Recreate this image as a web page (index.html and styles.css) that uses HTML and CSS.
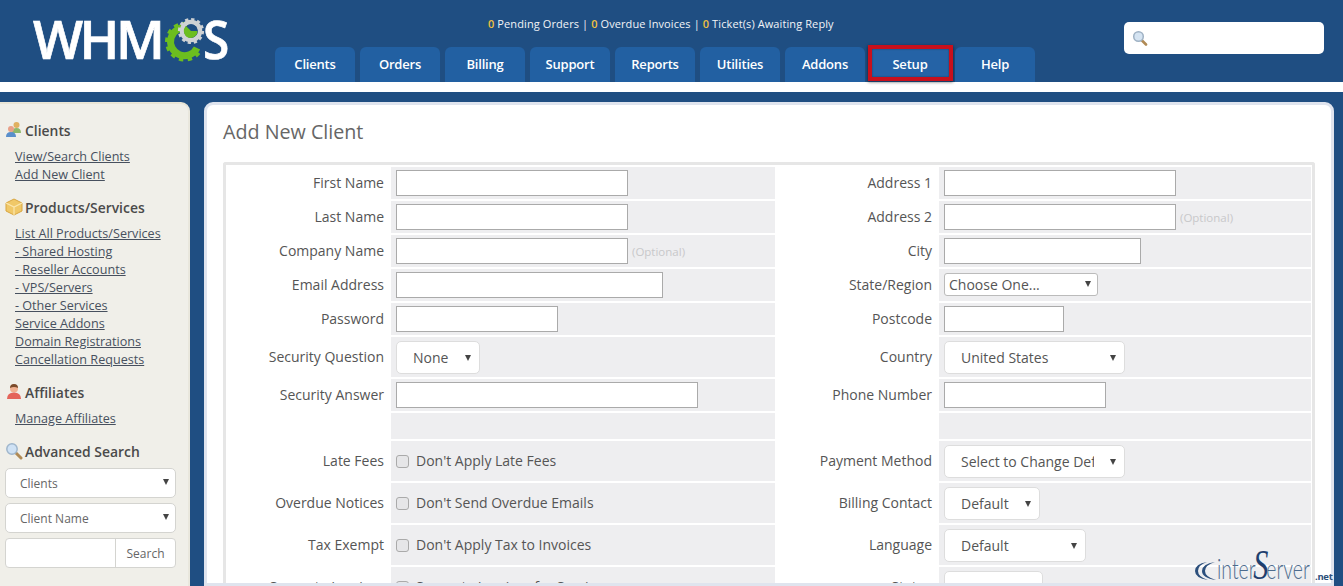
FILE: index.html
```html
<!DOCTYPE html>
<html lang="en">
<head>
<meta charset="utf-8">
<title>Add New Client</title>
<link rel="stylesheet" href="styles.css">
</head>
<body>
<header class="header">
  <a class="logo">WHM<svg class="logo-gear" viewBox="0 0 46 46" width="46" height="46" aria-hidden="true">
      <path d="M25.8 10.8 A14 14 0 1 0 36 31" fill="none" stroke="#6cbe1f" stroke-width="7"/>
      <path d="M25.8 7.5 A17.3 17.3 0 1 0 39 33" fill="none" stroke="#6cbe1f" stroke-width="5" stroke-dasharray="4.2 4.2"/>
      <circle cx="30" cy="14" r="9" fill="none" stroke="#cfd2d4" stroke-width="4.5"/>
      <circle cx="30" cy="14" r="11.5" fill="none" stroke="#cfd2d4" stroke-width="3.2" stroke-dasharray="3.2 2.8"/>
      <circle cx="30" cy="14" r="6.7" fill="#1f4e82"/>
      <path d="M30 14 L25 9 A7 7 0 0 0 30 21 A7 7 0 0 0 36.5 14Z" fill="#6cbe1f"/>
    </svg><span class="logo-s">S</span></a>
  <div class="head-mid">
    <p class="stats"><b>0</b> Pending Orders | <b>0</b> Overdue Invoices | <b>0</b> Ticket(s) Awaiting Reply</p>
    <nav class="tabs">
      <a class="tab">Clients</a><a class="tab">Orders</a><a class="tab">Billing</a><a class="tab">Support</a><a class="tab">Reports</a><a class="tab">Utilities</a><a class="tab">Addons</a><a class="tab tab-hl">Setup</a><a class="tab">Help</a>
    </nav>
  </div>
  <div class="search">
    <svg viewBox="0 0 16 16" width="16" height="16" aria-hidden="true"><path d="M9.5 10 L14 14.5" stroke="#b08a55" stroke-width="2.6" stroke-linecap="round"/><circle cx="6.5" cy="6.5" r="4.8" fill="#d5e4f2" stroke="#9fb2c4" stroke-width="1.5"/></svg>
  </div>
</header>
<div class="band"></div>

<div class="layout">
  <aside class="side">
    <h3 class="side-h">
      <svg class="ico" viewBox="0 0 18 18" width="18" height="18" aria-hidden="true"><circle cx="11.5" cy="4" r="3" fill="#e0b060"/><path d="M7 12 Q7 7 11.5 7 Q16 7 16 12Z" fill="#8fb86a"/><circle cx="6" cy="8" r="3" fill="#e8a088"/><path d="M1 16 Q1 11 6 11 Q11 11 11 16Z" fill="#5a8fcb"/></svg>
      Clients</h3>
    <ul class="links"><li><a>View/Search Clients</a></li><li><a>Add New Client</a></li></ul>
    <h3 class="side-h">
      <svg class="ico" viewBox="0 0 18 18" width="18" height="18" aria-hidden="true"><path d="M9 1 L17 5 V13 L9 17 L1 13 V5Z" fill="#f0c868" stroke="#d9a640" stroke-width="1"/><path d="M1 5 L9 9 L17 5 M9 9 V17" fill="none" stroke="#fbe7ae" stroke-width="1.2"/></svg>
      Products/Services</h3>
    <ul class="links"><li><a>List All Products/Services</a></li><li><a>- Shared Hosting</a></li><li><a>- Reseller Accounts</a></li><li><a>- VPS/Servers</a></li><li><a>- Other Services</a></li><li><a>Service Addons</a></li><li><a>Domain Registrations</a></li><li><a>Cancellation Requests</a></li></ul>
    <h3 class="side-h">
      <svg class="ico" viewBox="0 0 18 18" width="18" height="18" aria-hidden="true"><circle cx="9" cy="5.5" r="4" fill="#f0b090"/><path d="M5 5 Q5 1 9 1 Q13 1 13 5 Q9 3 5 5Z" fill="#7a4a2a"/><path d="M2 16 Q2 9.5 9 9.5 Q16 9.5 16 16Z" fill="#e4645a"/></svg>
      Affiliates</h3>
    <ul class="links"><li><a>Manage Affiliates</a></li></ul>
    <h3 class="side-h">
      <svg class="ico" viewBox="0 0 18 18" width="18" height="18" aria-hidden="true"><path d="M10.5 10.5 L16 16" stroke="#b08a55" stroke-width="3" stroke-linecap="round"/><circle cx="7" cy="7" r="5.2" fill="#cfe2f5" stroke="#9fb6cc" stroke-width="1.5"/></svg>
      Advanced Search</h3>
    <div class="side-form">
      <span class="sel sel-side"><select><option>Clients</option></select></span>
      <span class="sel sel-side"><select><option>Client Name</option></select></span>
      <div class="side-search"><input type="text"><button type="button">Search</button></div>
    </div>
  </aside>

  <main class="panel">
    <h1 class="title">Add New Client</h1>
    <div class="form">
      <div class="row r32">
        <label>First Name</label><div class="f"><input class="w232" type="text"></div>
        <label>Address 1</label><div class="f"><input class="w232" type="text"></div>
      </div>
      <div class="row r32">
        <label>Last Name</label><div class="f"><input class="w232" type="text"></div>
        <label>Address 2</label><div class="f"><input class="w232" type="text"><span class="opt">(Optional)</span></div>
      </div>
      <div class="row r32">
        <label>Company Name</label><div class="f"><input class="w232" type="text"><span class="opt">(Optional)</span></div>
        <label>City</label><div class="f"><input class="w197" type="text"></div>
      </div>
      <div class="row r32">
        <label>Email Address</label><div class="f"><input class="w267" type="text"></div>
        <label>State/Region</label><div class="f"><span class="sel sel-plain w154"><select><option>Choose One...</option></select></span></div>
      </div>
      <div class="row r32">
        <label>Password</label><div class="f"><input class="w162" type="text"></div>
        <label>Postcode</label><div class="f"><input class="w120" type="text"></div>
      </div>
      <div class="row r40">
        <label>Security Question</label><div class="f"><span class="sel w84"><select><option>None</option></select></span></div>
        <label>Country</label><div class="f"><span class="sel w181"><select><option>United States</option></select></span></div>
      </div>
      <div class="row r32">
        <label>Security Answer</label><div class="f"><input class="w302" type="text"></div>
        <label>Phone Number</label><div class="f"><input class="w162" type="text"></div>
      </div>
      <div class="row r26">
        <label></label><div class="f"></div>
        <label></label><div class="f"></div>
      </div>
      <div class="row r40">
        <label>Late Fees</label><div class="f"><input class="chk" type="checkbox"><span class="chk-t">Don't Apply Late Fees</span></div>
        <label>Payment Method</label><div class="f"><span class="sel w181"><select><option>Select to Change Default</option></select></span></div>
      </div>
      <div class="row r40">
        <label>Overdue Notices</label><div class="f"><input class="chk" type="checkbox"><span class="chk-t">Don't Send Overdue Emails</span></div>
        <label>Billing Contact</label><div class="f"><span class="sel w96"><select><option>Default</option></select></span></div>
      </div>
      <div class="row r40">
        <label>Tax Exempt</label><div class="f"><input class="chk" type="checkbox"><span class="chk-t">Don't Apply Tax to Invoices</span></div>
        <label>Language</label><div class="f"><span class="sel w142"><select><option>Default</option></select></span></div>
      </div>
      <div class="row r40">
        <label>Separate Invoices</label><div class="f"><input class="chk" type="checkbox"><span class="chk-t">Separate Invoices for Services</span></div>
        <label>Status</label><div class="f"><span class="sel w99"><select><option>Active</option></select></span></div>
      </div>
    </div>
  </main>
</div>

<div class="mark">
  <svg viewBox="0 0 22 20" width="22" height="20" aria-hidden="true"><path d="M12 1 Q0 3 0 10 Q0 17 13 19 Q3 16 3 10 Q3 4 12 1Z" fill="#2c4f7c"/><path d="M20 1 Q7 3 7 10 Q7 17 21 19 Q10 16 10 10 Q10 4 20 1Z" fill="#2c4f7c"/></svg><span class="mark-t">inter<span class="mark-s">S</span>erver</span><span class="mark-n">.net</span>
</div>
</body>
</html>
```
FILE: styles.css
```css
* { box-sizing: border-box; }
html, body { margin: 0; padding: 0; height: 586px; overflow: hidden; }
body { background: #1f4e82; font-family: "Open Sans", "Liberation Sans", sans-serif; font-size: 14px; color: #555; position: relative; }

.header { display: flex; height: 82px; padding-left: 33px; background: #1f4e82; }
.logo { display: flex; width: 242px; height: 62px; padding-top: 8px; font-family: "Open Sans", sans-serif; font-weight: 600; font-size: 53px; line-height: 62px; letter-spacing: -3.5px; color: #fff; -webkit-text-stroke: .7px #fff; }
.logo-gear { flex: none; margin: 9px -4px 0 0; }
.logo-s { display: block; transform: scaleX(.9); transform-origin: left; }
.head-mid { display: flex; flex-direction: column; width: 760px; }
.stats { margin: 17px 0 0; height: 14px; padding-left: 213px; font-size: 11px; line-height: 14px; letter-spacing: .1px; color: #f2f4f7; white-space: nowrap; }
.stats b { color: #f0c040; font-weight: 600; }
.tabs { display: flex; gap: 5px; margin-top: 16px; }
.tab { position: relative; display: flex; align-items: center; justify-content: center; width: 80px; height: 35px; padding-bottom: 2px; background: #2260a2; border-radius: 6px 6px 0 0; color: #fff; font-size: 13px; font-weight: 600; letter-spacing: -0.2px; }
.tab-hl { border-radius: 0; background: #2563a6; }
.tab-hl::after { content: ""; position: absolute; left: -2px; right: -3px; top: -2px; bottom: 1px; border: 4px solid #c8101c; box-shadow: 0 1px 3px rgba(0,0,0,.6), inset 0 0 2px rgba(0,0,0,.4); }
.search { display: flex; align-items: center; width: 200px; height: 32px; margin: 22px 19px 0 auto; padding-left: 8px; background: #fff; border-radius: 5px; }

.band { height: 10px; background: #fff; }

.layout { display: flex; gap: 14px; padding: 10px 9px 0 0; }
.side { flex: none; width: 190px; height: 484px; padding: 16px 0 0 5px; background: #f0efe9; border-top: 2px solid #e9e5d6; border-right: 2px solid #e9e7dd; border-radius: 0 9px 0 0; }
.side-h { display: flex; align-items: center; gap: 2px; margin: 0; height: 20px; font-size: 13.9px; font-weight: 600; color: #4a4a4a; white-space: nowrap; }
.ico { flex: none; width: 18px; height: 18px; }
.links { list-style: none; margin: 8px 0 13px; padding: 0 0 0 10px; font-size: 12.6px; line-height: 18px; color: #47505e; }
.links li { height: 18px; white-space: nowrap; }
.links a { text-decoration: underline; }
.side-form { display: flex; flex-direction: column; gap: 5px; width: 171px; margin-top: 7px; }
.side-search { display: flex; height: 30px; background: #fff; border: 1px solid #d4d4d0; border-radius: 4px; }
.side-search input { flex: 1; min-width: 0; border: 0; background: transparent; }
.side-search button { width: 60px; border: 0; border-left: 1px solid #d4d4d0; background: transparent; font: 12px "Open Sans", sans-serif; color: #666; padding: 0; }

.panel { flex: none; width: 1130px; height: 484px; padding: 14px 16px 0; background: #fff; border: 3px solid #dfe4ee; border-radius: 9px 9px 0 0; overflow: hidden; }
.title { margin: 0 0 17px; height: 26px; font-size: 19.7px; line-height: 26px; font-weight: 400; color: #666; }
.form { display: flex; flex-direction: column; gap: 2px; width: 1092px; padding: 2px 0 0; border: 3px solid #e6e6e6; border-bottom: 0; border-radius: 3px 3px 0 0; }
.row { display: grid; grid-template-columns: 165px 384px 164px 372px; flex: none; }
.r32 { height: 32px; }
.r40 { height: 40px; }
.r26 { height: 26px; }
.row label { align-self: center; padding-right: 7px; text-align: right; white-space: nowrap; margin-top: -2px; }
.f { display: flex; align-items: center; padding-left: 5px; background: #eeeef0; }
.f input[type="text"] { height: 26px; border: 1px solid #aaa; background: #fff; padding: 0; margin: 0; }
.w232 { width: 232px; }
.w197 { width: 197px; }
.w267 { width: 267px; }
.w162 { width: 162px; }
.w120 { width: 120px; }
.w302 { width: 302px; }
.opt { margin-left: 4px; font-size: 11.5px; color: #c8c8ca; }

.sel { position: relative; display: block; height: 33px; }
.sel select { display: block; width: 100%; height: 100%; margin: 0; padding: 1px 30px 0 16px; appearance: none; -webkit-appearance: none; border: 1px solid #ddd; border-radius: 5px; background: #fff; color: #555; font: 14px "Open Sans", sans-serif; }
.sel::after { content: ""; position: absolute; top: 14px; right: 9px; border-left: 3.5px solid transparent; border-right: 3.5px solid transparent; border-top: 6px solid #444; pointer-events: none; }
.w84 { width: 84px; }
.w181 { width: 181px; }
.w96 { width: 96px; }
.w142 { width: 142px; }
.w99 { width: 99px; }
.sel-plain { height: 23px; margin-top: -1px; }
.sel-plain select { padding: 0 20px 0 4px; border: 1px solid #bbb; border-radius: 3px; }
.sel-plain::after { top: 8px; right: 7px; }
.w154 { width: 154px; }
.sel-side { height: 30px; width: 171px; }
.sel-side select { padding: 0 20px 0 14px; font-size: 12px; color: #666; border-color: #d4d4d0; }
.sel-side::after { top: 11px; right: 7px; }

.chk { appearance: none; -webkit-appearance: none; flex: none; width: 13px; height: 13px; margin: 0; background: #e6e6e8; border: 1px solid #aaa; border-radius: 3px; }
.chk-t { margin-left: 7px; margin-top: -2px; }

.mark { position: absolute; left: 1195px; top: 553px; display: flex; align-items: flex-start; height: 33px; width: 140px; white-space: nowrap; }
.mark svg { flex: none; margin-top: 8px; }
.mark-t { flex: none; display: block; width: 98px; transform: scaleX(.72); transform-origin: left; font-family: Lato, sans-serif; font-weight: 300; font-size: 27px; line-height: 31px; color: #4d6c8e; }
.mark-s { font-family: "Liberation Serif", serif; font-style: italic; font-size: 42px; line-height: 20px; margin: 0 -3px; color: #1f3f6e; }
.mark-n { font-size: 9.5px; font-weight: 700; color: #2c4f7c; margin-top: 17px; letter-spacing: -0.3px; }
```
